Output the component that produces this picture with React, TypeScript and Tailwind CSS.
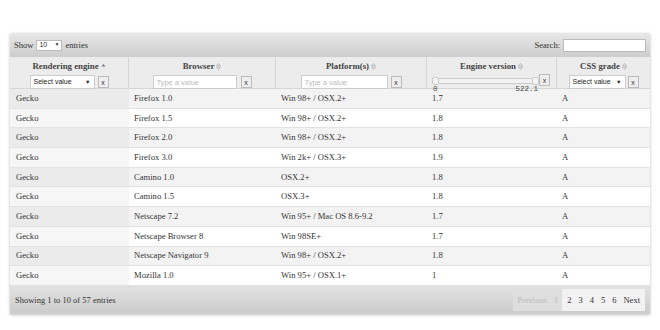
import React from 'react';

const ROWS: string[][] = [
  ['Gecko', 'Firefox 1.0', 'Win 98+ / OSX.2+', '1.7', 'A'],
  ['Gecko', 'Firefox 1.5', 'Win 98+ / OSX.2+', '1.8', 'A'],
  ['Gecko', 'Firefox 2.0', 'Win 98+ / OSX.2+', '1.8', 'A'],
  ['Gecko', 'Firefox 3.0', 'Win 2k+ / OSX.3+', '1.9', 'A'],
  ['Gecko', 'Camino 1.0', 'OSX.2+', '1.8', 'A'],
  ['Gecko', 'Camino 1.5', 'OSX.3+', '1.8', 'A'],
  ['Gecko', 'Netscape 7.2', 'Win 95+ / Mac OS 8.6-9.2', '1.7', 'A'],
  ['Gecko', 'Netscape Browser 8', 'Win 98SE+', '1.7', 'A'],
  ['Gecko', 'Netscape Navigator 9', 'Win 98+ / OSX.2+', '1.8', 'A'],
  ['Gecko', 'Mozilla 1.0', 'Win 95+ / OSX.1+', '1', 'A'],
];

const WIDTHS = ['w-[119px]', 'w-[147px]', 'w-[151px]', 'w-[130px]', 'w-[93px]'];

const SortBoth = () => (
  <svg width="5" height="7" viewBox="0 0 5 7" className="inline-block ml-[2px] -mt-[1px]">
    <path d="M2.5 0.5 L4.5 2.8 L0.5 2.8 Z M2.5 6.5 L4.5 4.2 L0.5 4.2 Z" fill="none" stroke="#aaa" strokeWidth="0.7" />
  </svg>
);

const SortUp = () => (
  <svg width="5" height="5" viewBox="0 0 5 5" className="inline-block ml-[2px] -mt-[2px]">
    <path d="M2.5 1 L4.5 3.5 L0.5 3.5 Z" fill="#777" />
  </svg>
);

const ClearBtn = () => (
  <span className="inline-flex items-center justify-center w-[11px] h-[12px] border border-[#bbb] bg-[#eee] text-[7px] font-normal text-[#333] font-['Liberation_Sans',sans-serif] leading-none">
    x
  </span>
);

const SelectBox = ({ w }: { w: string }) => (
  <span className={`inline-flex items-center justify-between whitespace-nowrap ${w} h-[14px] border border-[#ccc] bg-white px-[3px] text-[7px] font-normal text-[#222] font-['Liberation_Sans',sans-serif]`}>
    Select value
    <span className="text-[5.5px]">▼</span>
  </span>
);

const TextBox = ({ w }: { w: string }) => (
  <span className={`inline-flex items-center whitespace-nowrap ${w} h-[14px] border border-[#ccc] bg-white px-[3px] text-[7.5px] font-normal text-[#bbb] font-['Liberation_Sans',sans-serif]`}>
    Type a value
  </span>
);

export default function App() {
  return (
    <div className="w-[660px] h-[330px] bg-white pt-[33px] px-[10px] font-['Liberation_Serif',serif]">
      <div className="w-[640px] shadow-[0_1px_3px_rgba(0,0,0,0.25)]">
        {/* Top bar */}
        <div className="flex items-center justify-between h-[24px] px-[4px] bg-gradient-to-b from-[#e8e8e8] to-[#cdcdcd] rounded-t-[2px] text-[8.5px] text-[#333]">
          <div className="flex items-center gap-[3px]">
            <span>Show</span>
            <span className="inline-flex items-center justify-between w-[26px] h-[11px] border border-[#bbb] bg-white px-[2px] text-[7px] font-['Liberation_Sans',sans-serif]">
              10<span className="text-[5px]">▼</span>
            </span>
            <span>entries</span>
          </div>
          <div className="flex items-center gap-[3px]">
            <span>Search:</span>
            <span className="w-[83px] h-[13px] border border-[#bbb] bg-white" />
          </div>
        </div>

        {/* Header */}
        <div className="flex h-[32px] bg-[#ececec] border-b border-[#d6d6d6] text-[8.8px] font-bold text-[#444]">
          <div className={`${WIDTHS[0]} flex flex-col items-center pt-[3px] gap-[2px] border-r border-[#d6d6d6]`}>
            <span>Rendering engine<SortUp /></span>
            <div className="flex items-center gap-[3px]">
              <SelectBox w="w-[65px]" />
              <ClearBtn />
            </div>
          </div>
          <div className={`${WIDTHS[1]} flex flex-col items-center pt-[3px] gap-[2px] border-r border-[#d6d6d6]`}>
            <span>Browser<SortBoth /></span>
            <div className="flex items-center gap-[4px]">
              <TextBox w="w-[84px]" />
              <ClearBtn />
            </div>
          </div>
          <div className={`${WIDTHS[2]} flex flex-col items-center pt-[3px] gap-[2px] border-r border-[#d6d6d6]`}>
            <span>Platform(s)<SortBoth /></span>
            <div className="flex items-center gap-[3px]">
              <TextBox w="w-[87px]" />
              <ClearBtn />
            </div>
          </div>
          <div className={`${WIDTHS[3]} flex flex-col pt-[3px] border-r border-[#d6d6d6] pl-[6px] pr-[6px]`}>
            <span className="text-center">Engine version<SortBoth /></span>
            <div className="flex items-start gap-[1px] mt-[1px]">
              <div className="flex flex-col w-[106px]">
                <div className="relative h-[6px] mt-[4px] border border-[#ccc] bg-[#f2f2f2] rounded-[3px]">
                  <span className="absolute left-[-2px] top-[-2px] w-[7px] h-[8px] bg-[#f4f4f4] border border-[#ccc] rounded-[2px]" />
                  <span className="absolute right-[-2px] top-[-2px] w-[7px] h-[8px] bg-[#f4f4f4] border border-[#ccc] rounded-[2px]" />
                </div>
                <div className="flex justify-between text-[7.5px] font-normal text-[#444] font-['Liberation_Mono',monospace] leading-none mt-[2px]">
                  <span>0</span>
                  <span>522.1</span>
                </div>
              </div>
              <ClearBtn />
            </div>
          </div>
          <div className={`${WIDTHS[4]} flex flex-col items-center pt-[3px] gap-[2px]`}>
            <span>CSS grade<SortBoth /></span>
            <div className="flex items-center gap-[2px]">
              <SelectBox w="w-[57px]" />
              <ClearBtn />
            </div>
          </div>
        </div>

        {/* Body */}
        <div className="text-[8.6px] text-[#333]">
          {ROWS.map((row, i) => (
            <div
              key={i}
              className={`flex h-[19.7px] items-center border-b border-[#e2e2e2] ${i % 2 === 0 ? 'bg-[#f3f3f3]' : 'bg-white'}`}
            >
              {row.map((cell, j) => (
                <div
                  key={j}
                  className={`${WIDTHS[j]} h-full flex items-center ${j === 0 ? 'pl-[6px]' : 'pl-[5px]'} ${
                    j === 0 ? (i % 2 === 0 ? 'bg-[#ebebeb]' : 'bg-[#f6f6f6]') : ''
                  }`}
                >
                  {cell}
                </div>
              ))}
            </div>
          ))}
        </div>

        {/* Footer */}
        <div className="flex items-center justify-between h-[28px] pl-[5px] pr-[5px] bg-gradient-to-b from-[#e2e2e2] to-[#cbcbcb] text-[8.5px] text-[#333]">
          <span>Showing 1 to 10 of 57 entries</span>
          <div className="flex h-[22px]">
            <div className="flex items-center gap-[7px] px-[4px] bg-[#dedede] text-[#bbb]">
              <span>Previous</span>
              <span>1</span>
            </div>
            <div className="flex items-center gap-[7px] px-[5px] bg-[#f2f2f2] text-[#333]">
              <span>2</span>
              <span>3</span>
              <span>4</span>
              <span>5</span>
              <span>6</span>
              <span>Next</span>
            </div>
          </div>
        </div>
      </div>
    </div>
  );
}
